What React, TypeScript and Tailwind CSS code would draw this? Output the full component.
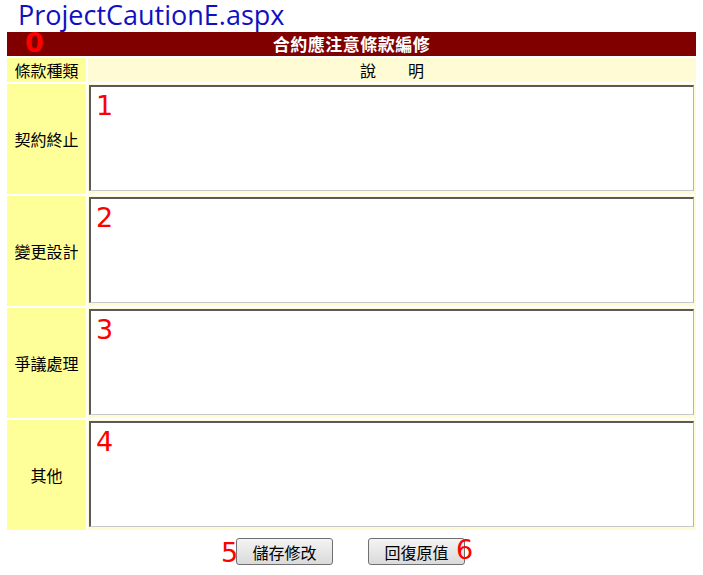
import React from "react";

const cjk = { fontFamily: '"Noto Sans CJK TC", "Noto Sans", sans-serif' };

function Mark({ n, className }: { n: string; className: string }) {
  return (
    <span
      className={`absolute text-[27px] leading-none text-[#ff0000] ${className}`}
      style={{ fontFamily: '"DejaVu Sans", sans-serif' }}
    >
      {n}
    </span>
  );
}

const rows = [
  { label: "契約終止", n: "1" },
  { label: "變更設計", n: "2" },
  { label: "爭議處理", n: "3" },
  { label: "其他", n: "4" },
];

export default function App() {
  return (
    <div className="w-[703px] h-[575px] bg-white relative overflow-hidden" style={cjk}>
      <div
        className="h-[32px] pl-[18px] text-[27px] leading-[32px] text-[#1010c0] -translate-y-[1px]"
        style={{ fontFamily: '"Open Sans", "DejaVu Sans", sans-serif' }}
      >
        ProjectCautionE.aspx
      </div>
      <div className="ml-[7px] w-[689px] grid grid-cols-[79px_1fr] gap-[2px]">
        <div className="col-span-2 h-[24px] bg-[#800000] text-white font-bold text-[17px] leading-[24px] text-center relative tracking-[0.5px]">
          合約應注意條款編修
          <Mark n="0" className="left-[18px] top-[-3px]" />
        </div>
        <div className="h-[24px] bg-[#ffff99] text-[16px] leading-[24px] text-center text-black">條款種類</div>
        <div className="h-[24px] bg-[#fffbd5] text-[16px] leading-[24px] text-center text-black">說　　明</div>
        {rows.map((r) => (
          <React.Fragment key={r.n}>
            <div className="h-[110px] bg-[#ffff99] flex items-center justify-center text-[16px] text-black">
              {r.label}
            </div>
            <div className="h-[110px] bg-[#fffbd5] p-[1px] pr-[2px] pb-[2px] relative">
              <textarea className="w-full h-[106px] bg-white resize-none outline-none border-t-2 border-l-2 border-r border-b border-t-[#5a5a5a] border-l-[#5a5a5a] border-r-[#b8b4a4] border-b-[#c8c8c8]" />
              <Mark n={r.n} className="left-[8px] top-[8px]" />
            </div>
          </React.Fragment>
        ))}
      </div>
      <div className="flex justify-center gap-[35px] mt-[8px] pr-[2px]">
        <div className="relative">
          <button className="w-[97px] h-[27px] rounded-[3px] border border-[#707070] bg-gradient-to-b from-[#f4f4f4] to-[#dadada] text-[16px] text-black leading-none">
            儲存修改
          </button>
          <Mark n="5" className="left-[-15px] top-[1px]" />
        </div>
        <div className="relative">
          <button className="w-[97px] h-[27px] rounded-[3px] border border-[#707070] bg-gradient-to-b from-[#f4f4f4] to-[#dadada] text-[16px] text-black leading-none">
            回復原值
          </button>
          <Mark n="6" className="left-[88px] top-[-2px]" />
        </div>
      </div>
    </div>
  );
}
